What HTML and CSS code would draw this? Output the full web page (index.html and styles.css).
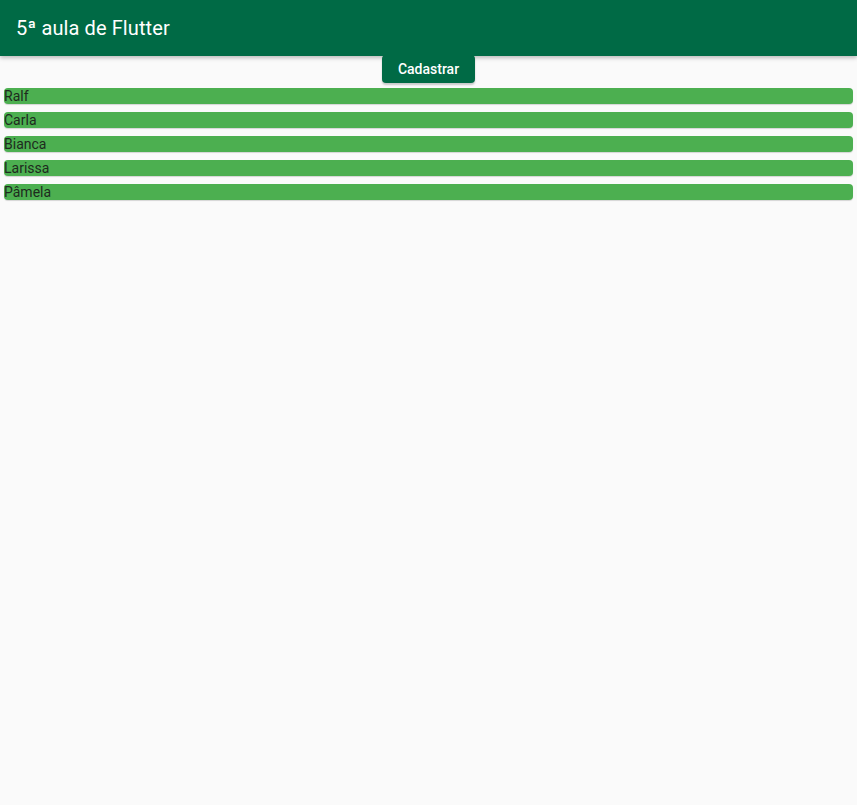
FILE: index.html
```html
<!DOCTYPE html>
<html lang="pt">
<head>
<meta charset="utf-8">
<title>5ª aula de Flutter</title>
<link rel="stylesheet" href="styles.css">
</head>
<body>
<header class="appbar">
  <h1 class="title">5ª aula de Flutter</h1>
</header>
<main class="content">
  <div class="actions">
    <button class="btn">Cadastrar</button>
  </div>
  <ul class="list">
    <li class="item">Ralf</li>
    <li class="item">Carla</li>
    <li class="item">Bianca</li>
    <li class="item">Larissa</li>
    <li class="item">Pâmela</li>
  </ul>
</main>
</body>
</html>
```

FILE: styles.css
```css
* { box-sizing: border-box; }
html, body {
  margin: 0;
  padding: 0;
  background: #fafafa;
  font-family: Roboto, "Liberation Sans", sans-serif;
  height: 100%;
}
.appbar {
  position: relative;
  z-index: 2;
  height: 56px;
  background: #006a45;
  display: flex;
  align-items: center;
  padding: 0 16px;
  box-shadow: 0 2px 4px rgba(0,0,0,0.25);
}
.title {
  margin: 0;
  color: #fff;
  font-size: 20px;
  font-weight: 400;
  letter-spacing: 0.1px;
}
.content {
  display: flex;
  flex-direction: column;
}
.actions {
  display: flex;
  justify-content: center;
  height: 28px;
}
.btn {
  position: relative;
  z-index: 3;
  margin-top: -1px;
  height: 28px;
  width: 93px;
  border: none;
  border-radius: 4px;
  background: #006a45;
  color: #fff;
  font-family: Roboto, "Liberation Sans", sans-serif;
  font-size: 14px;
  font-weight: 500;
  padding: 0;
  box-shadow: 0 2px 2px rgba(0,0,0,0.2);
}
.list {
  list-style: none;
  margin: 0;
  padding: 0;
}
.item {
  margin: 4px 4px 8px;
  height: 16px;
  line-height: 16px;
  background: #4caf50;
  border-radius: 4px;
  color: #1e2a1e;
  font-size: 14px;
  box-shadow: 0 1px 1px rgba(0,0,0,0.15);
}
.item + .item { margin-top: 0; }
```
